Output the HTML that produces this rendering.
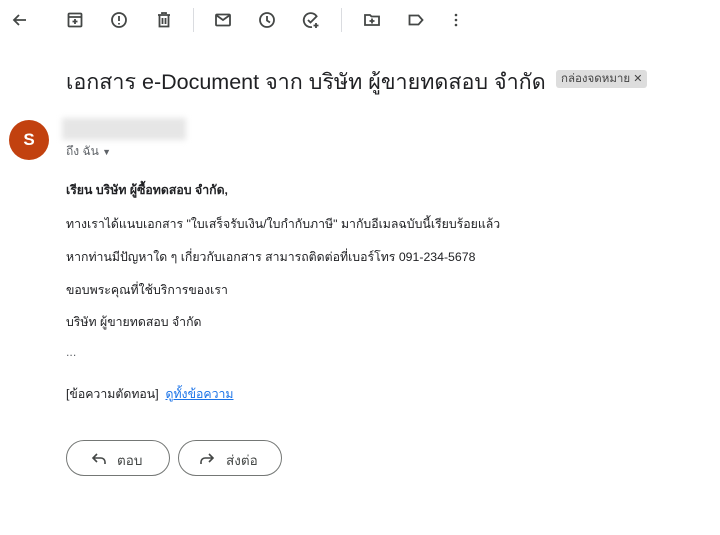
<html><head><style>
body{margin:0;width:720px;height:535px;background:#fff;font-family:"Liberation Sans","Noto Sans CJK SC",sans-serif;color:#202124;position:relative;overflow:hidden}
.a{position:absolute}
svg.i{position:absolute;width:20px;height:20px;fill:none;stroke:#444746;stroke-width:1.8}
.t{position:absolute;left:66px;font-size:12.3px;white-space:nowrap}
.btn{position:absolute;top:440px;height:34px;border:1px solid #747775;border-radius:18px;font-size:13.5px;color:#444746}
</style></head><body>
<svg class="i" style="left:10px;top:10px" viewBox="0 0 20 20"><path d="M16 10H4M9 5l-5 5 5 5"/></svg>
<svg class="i" style="left:65px;top:10px" viewBox="0 0 20 20"><rect x="3.5" y="3.5" width="13" height="13" rx="1"/><path d="M3.5 7h13M10 9v5M7.5 11.5h5"/></svg>
<svg class="i" style="left:109px;top:10px" viewBox="0 0 20 20"><circle cx="10" cy="10" r="7"/><path d="M10 6v5M10 13v1.5"/></svg>
<svg class="i" style="left:154px;top:10px" viewBox="0 0 20 20"><path d="M4 5h12M8 4V3h4v1M5.5 5v11.5h9V5M8.5 8v6M11.5 8v6"/></svg>
<div class="a" style="left:193px;top:8px;width:1px;height:24px;background:#dadce0"></div>
<svg class="i" style="left:213px;top:10px" viewBox="0 0 20 20"><rect x="3" y="4.5" width="14" height="11" rx="1"/><path d="M3 5l7 5 7-5"/></svg>
<svg class="i" style="left:257px;top:10px" viewBox="0 0 20 20"><circle cx="10" cy="10" r="7"/><path d="M10 6v4.5l3 2"/></svg>
<svg class="i" style="left:301px;top:10px" viewBox="0 0 20 20"><path d="M16 7A7 7 0 1 0 11 17M7 10l2.5 2.5L16 6M15 13v5M12.5 15.5h5"/></svg>
<div class="a" style="left:341px;top:8px;width:1px;height:24px;background:#dadce0"></div>
<svg class="i" style="left:362px;top:10px" viewBox="0 0 20 20"><path d="M3 5h5l1.5 1.5H17V15H3zM10 8.5v5M7.5 11h5"/></svg>
<svg class="i" style="left:406px;top:10px" viewBox="0 0 20 20"><path d="M3.5 5.5h9l4 4.5-4 4.5h-9z"/></svg>
<svg class="i" style="left:446px;top:10px" viewBox="0 0 20 20" ><circle cx="10" cy="5" r="1.3" fill="#444746" stroke="none"/><circle cx="10" cy="10" r="1.3" fill="#444746" stroke="none"/><circle cx="10" cy="15" r="1.3" fill="#444746" stroke="none"/></svg>
<div class="a" style="left:66px;top:65px;font-size:21.5px;white-space:nowrap">เอกสาร e-Document จาก บริษัท ผู้ขายทดสอบ จำกัด</div>
<div class="a" style="left:556px;top:70px;width:91px;height:18px;background:#dddddd;border-radius:3px;font-size:11.5px;color:#444;line-height:18px;padding-left:5px;box-sizing:border-box;white-space:nowrap">กล่องจดหมาย <span style="font-size:11px">✕</span></div>
<div class="a" style="left:9px;top:120px;width:40px;height:40px;border-radius:50%;background:#c2410f;color:#fff;font-size:17px;font-weight:bold;text-align:center;line-height:40px">S</div>
<div class="a" style="left:62px;top:118px;width:124px;height:22px;background:#e6e6e6;filter:blur(3px)"></div>
<div class="a" style="left:66px;top:142px;font-size:12px;color:#5f6368">ถึง ฉัน <span style="font-size:9px">▼</span></div>
<div class="t" style="top:181px;font-weight:bold">เรียน บริษัท ผู้ซื้อทดสอบ จำกัด,</div>
<div class="t" style="top:215px">ทางเราได้แนบเอกสาร "ใบเสร็จรับเงิน/ใบกำกับภาษี" มากับอีเมลฉบับนี้เรียบร้อยแล้ว</div>
<div class="t" style="top:248px">หากท่านมีปัญหาใด ๆ เกี่ยวกับเอกสาร สามารถติดต่อที่เบอร์โทร 091-234-5678</div>
<div class="t" style="top:281px">ขอบพระคุณที่ใช้บริการของเรา</div>
<div class="t" style="top:313px">บริษัท ผู้ขายทดสอบ จำกัด</div>
<div class="t" style="top:345px;color:#5f6368">...</div>
<div class="t" style="top:385px">[ข้อความตัดทอน] &nbsp;<span style="color:#1a73e8;text-decoration:underline">ดูทั้งข้อความ</span></div>
<div class="btn" style="left:66px;width:102px"><svg class="i" style="left:22px;top:8px;stroke-width:1.6" viewBox="0 0 20 20"><path d="M8 5L4 9l4 4M4 9h8a4 4 0 0 1 4 4v2"/></svg><span class="a" style="left:50px;top:8px">ตอบ</span></div>
<div class="btn" style="left:178px;width:102px"><svg class="i" style="left:18px;top:8px;stroke-width:1.6" viewBox="0 0 20 20"><path d="M12 5l4 4-4 4M16 9H8a4 4 0 0 0-4 4v2"/></svg><span class="a" style="left:47px;top:8px">ส่งต่อ</span></div>
</body></html>
